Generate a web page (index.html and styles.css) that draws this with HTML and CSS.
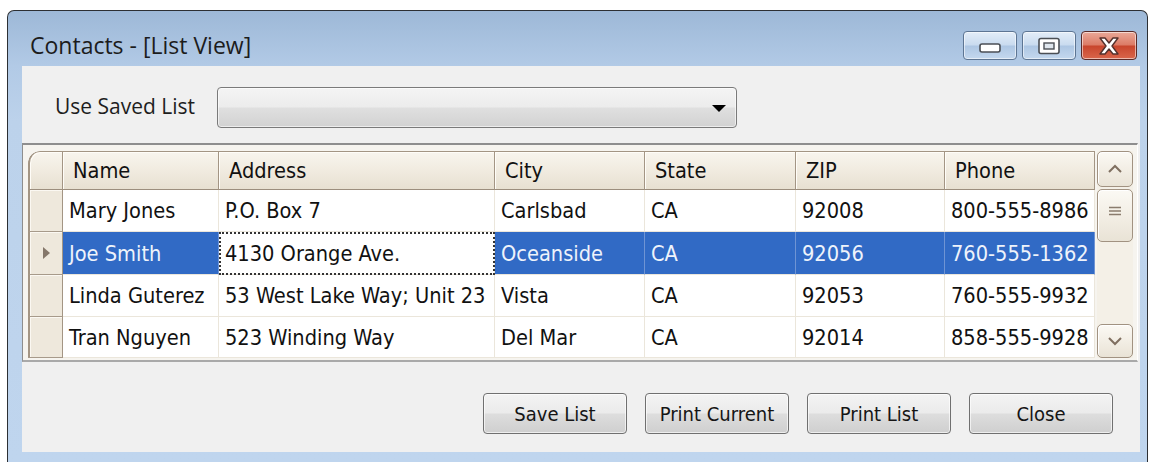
FILE: index.html
```html
<!DOCTYPE html>
<html lang="en">
<head>
<meta charset="utf-8">
<title>Contacts - [List View]</title>
<link rel="stylesheet" href="styles.css">
</head>
<body>
<div class="window">
  <div class="titlebar">
    <span class="title">Contacts - [List View]</span>
    <div class="caption-buttons">
      <div class="cap-btn cap-min">
        <svg width="24" height="12" viewBox="0 0 24 12"><rect x="2" y="2" width="20" height="8" rx="2" fill="#fff" stroke="#4b4f55" stroke-width="1.6"/></svg>
      </div>
      <div class="cap-btn">
        <svg width="24" height="18" viewBox="0 0 24 18"><rect x="2" y="1.5" width="20" height="15" rx="2" fill="#fff" stroke="#4b4f55" stroke-width="1.6"/><rect x="7" y="6" width="10" height="6" fill="#dfe6ee" stroke="#4b4f55" stroke-width="1.4"/></svg>
      </div>
      <div class="cap-btn cap-close">
        <svg width="28" height="20" viewBox="0 0 28 20"><path d="M5 2 H10 L14 7 L18 2 H23 L17 10 L23 18 H18 L14 13 L10 18 H5 L11 10 Z" fill="#fff" stroke="#54302c" stroke-width="1.4" stroke-linejoin="round"/></svg>
      </div>
    </div>
  </div>

  <div class="client">
    <div class="saved-row">
      <span class="saved-label">Use Saved List</span>
      <div class="combo"><span class="combo-arrow"></span></div>
    </div>

    <div class="grid-panel">
      <div class="table">
        <div class="hc hc-corner"></div>
        <div class="hc">Name</div>
        <div class="hc">Address</div>
        <div class="hc">City</div>
        <div class="hc">State</div>
        <div class="hc">ZIP</div>
        <div class="hc">Phone</div>

        <div class="rh"></div>
        <div class="cell">Mary Jones</div>
        <div class="cell">P.O. Box 7</div>
        <div class="cell">Carlsbad</div>
        <div class="cell">CA</div>
        <div class="cell">92008</div>
        <div class="cell">800-555-8986</div>

        <div class="rh rh-current"><span class="row-arrow"></span></div>
        <div class="cell sel">Joe Smith</div>
        <div class="cell focus">4130 Orange Ave.</div>
        <div class="cell sel">Oceanside</div>
        <div class="cell sel">CA</div>
        <div class="cell sel">92056</div>
        <div class="cell sel">760-555-1362</div>

        <div class="rh"></div>
        <div class="cell">Linda Guterez</div>
        <div class="cell">53 West Lake Way; Unit 23</div>
        <div class="cell">Vista</div>
        <div class="cell">CA</div>
        <div class="cell">92053</div>
        <div class="cell">760-555-9932</div>

        <div class="rh"></div>
        <div class="cell">Tran Nguyen</div>
        <div class="cell">523 Winding Way</div>
        <div class="cell">Del Mar</div>
        <div class="cell">CA</div>
        <div class="cell">92014</div>
        <div class="cell">858-555-9928</div>
      </div>

      <div class="vscroll">
        <div class="sb-btn sb-up">
          <svg width="16" height="10" viewBox="0 0 16 10"><path d="M2 8 L8 2 L14 8" fill="none" stroke="#7f6f60" stroke-width="2"/></svg>
        </div>
        <div class="sb-thumb">
          <svg width="14" height="10" viewBox="0 0 14 10"><path d="M1 1.5 H13 M1 5 H13 M1 8.5 H13" stroke="#8a7c6e" stroke-width="1.4"/></svg>
        </div>
        <div class="sb-track"></div>
        <div class="sb-btn sb-down">
          <svg width="16" height="10" viewBox="0 0 16 10"><path d="M2 2 L8 8 L14 2" fill="none" stroke="#7f6f60" stroke-width="2"/></svg>
        </div>
      </div>
    </div>

    <div class="actions">
      <button class="btn" type="button">Save List</button>
      <button class="btn" type="button">Print Current</button>
      <button class="btn" type="button">Print List</button>
      <button class="btn" type="button">Close</button>
    </div>
  </div>
</div>
</body>
</html>
```

FILE: styles.css
```css
* { box-sizing: border-box; }

html, body {
  margin: 0;
  padding: 0;
  background: #ffffff;
}

body {
  width: 1150px;
  height: 462px;
  overflow: hidden;
  font-family: "Open Sans", "Noto Sans", sans-serif;
  color: #1a1a1a;
}

/* window frame */
.window {
  margin: 10px 0 0 7px;
  width: 1141px;
  height: 452px;
  border: 1px solid #2c2f33;
  border-bottom: none;
  border-radius: 7px 7px 0 0;
  background: linear-gradient(#9db8d7 0px, #b2cae6 55px, #bcd2eb 110px, #bfd5ee 100%);
  display: flex;
  flex-direction: column;
}

.titlebar {
  height: 55px;
  flex: none;
  display: flex;
  align-items: flex-start;
  justify-content: space-between;
  padding: 0 10px 0 22px;
}

.title {
  margin-top: 19px;
  font-size: 23px;
  line-height: 30px;
  color: #1c1c1c;
}

.caption-buttons {
  display: flex;
  gap: 5px;
  margin-top: 20px;
}

.cap-btn {
  width: 54px;
  height: 29px;
  border: 1px solid #5d7593;
  border-radius: 4px;
  background: linear-gradient(#e3edf8 0%, #c9dbef 48%, #adc6e3 52%, #c4d8ee 100%);
  box-shadow: inset 0 0 0 1px rgba(255, 255, 255, 0.55);
  display: flex;
  align-items: center;
  justify-content: center;
}

.cap-min {
  align-items: flex-end;
  padding-bottom: 5px;
}

.cap-close {
  width: 56px;
  border-color: #5a2a27;
  background: linear-gradient(#eaa898 0%, #dc7b66 48%, #c8452d 52%, #d9664b 100%);
}

/* client area */
.client {
  margin-left: 14px;
  width: 1118px;
  height: 386px;
  background: #f0f0f0;
  display: flex;
  flex-direction: column;
}

.saved-row {
  display: flex;
  align-items: center;
  height: 41px;
  margin-top: 21px;
}

.saved-label {
  width: 195px;
  padding-left: 33px;
  padding-bottom: 3px;
  font-size: 21px;
  color: #1e1e1e;
}

.combo {
  width: 520px;
  height: 41px;
  border: 1px solid #7a7a7a;
  border-radius: 4px;
  background: linear-gradient(#f4f4f4 0%, #ececec 48%, #dfdfdf 52%, #d2d2d2 100%);
  box-shadow: inset 0 0 0 1px rgba(255, 255, 255, 0.6);
  display: flex;
  align-items: center;
  justify-content: flex-end;
  padding-right: 10px;
}

.combo-arrow {
  width: 0;
  height: 0;
  border-left: 7px solid transparent;
  border-right: 7px solid transparent;
  border-top: 7px solid #000;
  margin-top: 2px;
}

/* data grid */
.grid-panel {
  margin-top: 15px;
  margin-right: 2px;
  height: 219px;
  border-top: 2px solid #8e8e8e;
  border-left: 1px solid #8e8e8e;
  border-right: 1px solid #ffffff;
  border-bottom: 2px solid #a9a9a9;
  background: #f6f4ef;
  padding: 6px 4px 0 5px;
  display: flex;
  gap: 2px;
}

.table {
  display: grid;
  grid-template-columns: 35px 156px 276px 150px 151px 149px 150px;
  grid-template-rows: 39px 42px 43px 42px 41px;
  align-self: flex-start;
  font-family: "DejaVu Sans Condensed", "DejaVu Sans", sans-serif;
  font-size: 21.6px;
  color: #111;
  background: #fff;
  border-top-left-radius: 12px;
  overflow: hidden;
}

.hc {
  display: flex;
  align-items: center;
  padding-left: 10px;
  background: linear-gradient(#f8f5ee 0%, #efe9dd 60%, #e7e0d1 100%);
  border-top: 1px solid #a39584;
  border-right: 1px solid #a39584;
  border-bottom: 1px solid #9c8e7d;
  box-shadow: inset 1px 1px 0 #fffdf8;
}

.hc-corner {
  border-left: 2px solid #a39584;
  border-top-left-radius: 12px;
}

.rh {
  background: #eee8dc;
  border-left: 2px solid #a39584;
  border-right: 1px solid #a39584;
  border-bottom: 1px solid #a79a8a;
  box-shadow: inset 1px 1px 0 #fbf8f2;
  display: flex;
  align-items: center;
  justify-content: center;
}

.row-arrow {
  width: 0;
  height: 0;
  border-top: 6px solid transparent;
  border-bottom: 6px solid transparent;
  border-left: 7px solid #85776a;
  margin-left: 1px;
}

.cell {
  display: flex;
  align-items: center;
  padding-left: 6px;
  white-space: nowrap;
  background: #fff;
  border-right: 1px solid #ebe6db;
  border-bottom: 1px solid #ebe6db;
}

.cell.sel {
  background: #316ac5;
  color: #eef3fb;
  border-right-color: #6f94d4;
  border-bottom-color: #ebe6db;
}

.cell.focus {
  background: #fff;
  color: #111;
  outline: 2px dotted #333;
  outline-offset: -2px;
}

/* vertical scroll bar */
.vscroll {
  width: 36px;
  height: 207px;
  display: flex;
  flex-direction: column;
  background: #f4f0e7;
}

.sb-btn, .sb-thumb {
  border: 1px solid #a19281;
  border-radius: 5px;
  background: linear-gradient(#fbf9f4 0%, #f1ece2 60%, #e9e3d6 100%);
  box-shadow: inset 1px 1px 0 #fff;
  display: flex;
  align-items: center;
  justify-content: center;
}

.sb-up { height: 36px; }

.sb-thumb {
  height: 53px;
  margin-top: 2px;
  align-items: flex-start;
  padding-top: 16px;
}

.sb-track { flex: 1; }

.sb-down { height: 34px; }

/* command buttons */
.actions {
  display: flex;
  justify-content: flex-end;
  gap: 18px;
  padding-right: 27px;
  margin-top: 31px;
}

.btn {
  width: 144px;
  height: 41px;
  margin: 0;
  padding: 0;
  border: 1px solid #707070;
  border-radius: 4px;
  background: linear-gradient(#f3f3f3 0%, #ebebeb 48%, #dddddd 52%, #cfcfcf 100%);
  box-shadow: inset 0 0 0 1px rgba(255, 255, 255, 0.65);
  font-family: "DejaVu Sans Condensed", "DejaVu Sans", sans-serif;
  font-size: 20px;
  color: #151515;
}
```
